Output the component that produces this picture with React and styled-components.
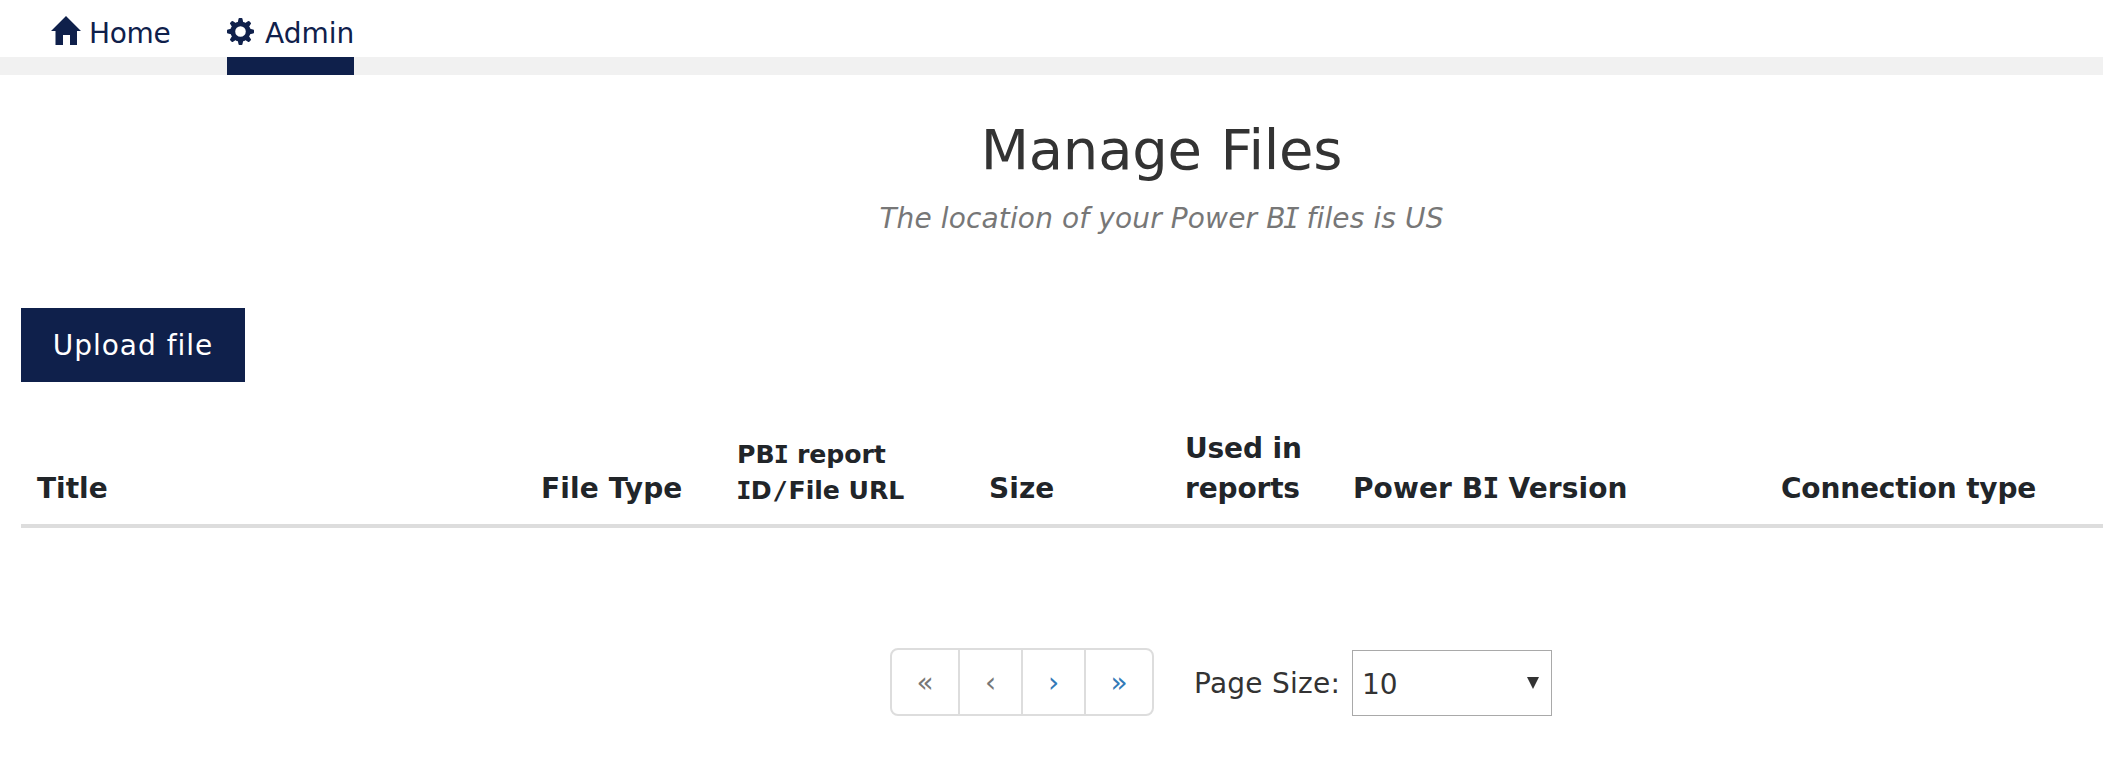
import React from 'react';
import styled, { createGlobalStyle } from 'styled-components';

const navy = '#0f204b';

const GlobalStyle = createGlobalStyle`
  *, *::before, *::after { box-sizing: border-box; }
  body {
    margin: 0;
    background: #fff;
    color: #333;
    font-family: 'DejaVu Sans', Verdana, sans-serif;
    font-size: 28px;
    line-height: 40px;
    overflow: hidden;
  }
`;

const Page = styled.div`
  height: 782px;
  overflow: hidden;
`;

const Nav = styled.nav`
  display: flex;
  height: 75px;
  padding-left: 51px;
  gap: 56px;
  background: linear-gradient(to bottom, #fff 57px, #f1f1f1 57px);
`;

const NavItem = styled.a`
  display: flex;
  align-items: flex-start;
  width: ${(p) => p.$width}px;
  padding-top: 14px;
  color: ${navy};
  text-decoration: none;
  white-space: nowrap;
  border-bottom: 18px solid ${(p) => (p.$active ? navy : 'transparent')};

  svg {
    flex: none;
    margin: ${(p) => p.$iconMargin};
  }
`;

const NavLabel = styled.span`
  letter-spacing: ${(p) => p.$track || 0}px;
`;

const Heading = styled.header`
  display: flex;
  flex-direction: column;
  align-items: center;
  padding-left: 220px;
  margin-top: 35px;
`;

const Title = styled.h1`
  margin: 0;
  font-size: 56px;
  font-weight: 400;
  line-height: 80px;
  letter-spacing: -0.2px;
  word-spacing: 1px;
`;

const Subtitle = styled.p`
  margin: 9px 0 0;
  color: #777;
  font-style: italic;
  letter-spacing: 0.13px;
  white-space: nowrap;
`;

const UploadButton = styled.button`
  display: block;
  width: 224px;
  height: 74px;
  margin: 69px 0 0 21px;
  padding: 2px 0 0;
  border: 0;
  border-radius: 0;
  background: ${navy};
  color: #fff;
  font: inherit;
  letter-spacing: 1px;
`;

const TableHead = styled.div`
  display: grid;
  grid-template-columns: 504px 196px 252px 196px 168px 428px 1fr;
  align-items: end;
  height: 146px;
  margin-left: 21px;
  padding-bottom: 15px;
  border-bottom: 4px solid #ddd;
`;

const HeadCell = styled.div`
  padding-left: 16px;
  color: #212529;
  font-size: ${(p) => (p.$small ? 25.2 : 28)}px;
  font-weight: 700;
  line-height: ${(p) => (p.$small ? 36 : 40)}px;
  letter-spacing: ${(p) => p.$track || 0}px;
  white-space: pre-line;
`;

const WideGlyph = styled.span`
  margin: 0 ${(p) => p.$side}em;
  font-family: 'DejaVu Sans Mono', monospace;
  line-height: 1;
`;

const Footer = styled.footer`
  display: flex;
  align-items: center;
  height: 68px;
  margin: 120px 0 0 890px;
`;

const Pager = styled.div`
  display: flex;
  width: 264px;
  height: 68px;
  border: 2px solid #ddd;
  border-radius: 8px;
`;

const PagerButton = styled.a`
  display: flex;
  align-items: center;
  justify-content: center;
  width: ${(p) => p.$width}px;
  padding-top: 2px;
  color: ${(p) => (p.$disabled ? '#777' : '#337ab7')};

  & + & { border-left: 2px solid #ddd; }
`;

const SizeLabel = styled.label`
  width: 158px;
  margin-left: 40px;
  padding-top: 3px;
  letter-spacing: 0.25px;
  white-space: nowrap;
`;

const SizeSelect = styled.div`
  display: flex;
  align-items: center;
  justify-content: space-between;
  width: 200px;
  height: 66px;
  margin-top: 2px;
  padding: 0 12px 0 9px;
  border: 1px solid #a9a9a9;
`;

const SizeValue = styled.span`
  padding-top: 3px;
`;

const HomeIcon = () => (
  <svg width="30" height="29" viewBox="0 0 30 29" fill={navy}>
    <path d="M15 0 30 15H26V29H19V19H12V29H4.5V15H0Z" />
  </svg>
);

const GearIcon = () => (
  <svg width="27" height="27" viewBox="0 0 27 27" fill={navy}>
    {[0, 45, 90, 135].map((angle) => (
      <path
        key={angle}
        transform={`rotate(${angle} 13.5 13.5)`}
        d="M11.5 1Q11.5 0 12.5 0H14.5Q15.5 0 15.5 1L16.4 5V7H10.6V5ZM11.5 26Q11.5 27 12.5 27H14.5Q15.5 27 15.5 26L16.4 22V20H10.6V22Z"
      />
    ))}
    <circle cx="13.5" cy="13.5" r="7.7" fill="none" stroke={navy} strokeWidth="4.8" />
  </svg>
);

const ArrowIcon = () => (
  <svg width="12" height="12" viewBox="0 0 12 12" fill="#333">
    <path d="M0 0H12L6 12Z" />
  </svg>
);

const BoldI = () => <WideGlyph $side={-0.028}>I</WideGlyph>;

const columns = [
  { id: 'title', label: 'Title' },
  { id: 'type', label: 'File Type', track: 0.15 },
  {
    id: 'url',
    small: true,
    track: -0.08,
    label: (
      <>
        PB<BoldI /> report{'\n'}
        <BoldI />D<WideGlyph $side={0.04}>/</WideGlyph>File URL
      </>
    ),
  },
  { id: 'size', label: 'Size', track: 0.1 },
  { id: 'used', label: 'Used in\nreports', track: -0.15 },
  { id: 'version', label: <>Power B<BoldI /> Version</>, track: 0.1 },
  { id: 'connection', label: 'Connection type', track: -0.18 },
];

export default function App() {
  return (
    <Page>
      <GlobalStyle />
      <Nav>
        <NavItem $width={120} $iconMargin="2px 8px 0 0">
          <HomeIcon />
          <NavLabel $track={-0.3}>Home</NavLabel>
        </NavItem>
        <NavItem $active $width={127} $iconMargin="4px 11px 0 0">
          <GearIcon />
          <NavLabel>Admin</NavLabel>
        </NavItem>
      </Nav>
      <Heading>
        <Title>Manage Files</Title>
        <Subtitle>
          The location of your Power B<WideGlyph $side={-0.09}>I</WideGlyph> files is US
        </Subtitle>
      </Heading>
      <UploadButton>Upload file</UploadButton>
      <TableHead>
        {columns.map((c) => (
          <HeadCell key={c.id} $small={c.small} $track={c.track}>{c.label}</HeadCell>
        ))}
      </TableHead>
      <Footer>
        <Pager>
          <PagerButton $width={66} $disabled>«</PagerButton>
          <PagerButton $width={63} $disabled>‹</PagerButton>
          <PagerButton $width={63}>›</PagerButton>
          <PagerButton $width={68}>»</PagerButton>
        </Pager>
        <SizeLabel>Page Size:</SizeLabel>
        <SizeSelect>
          <SizeValue>10</SizeValue>
          <ArrowIcon />
        </SizeSelect>
      </Footer>
    </Page>
  );
}
